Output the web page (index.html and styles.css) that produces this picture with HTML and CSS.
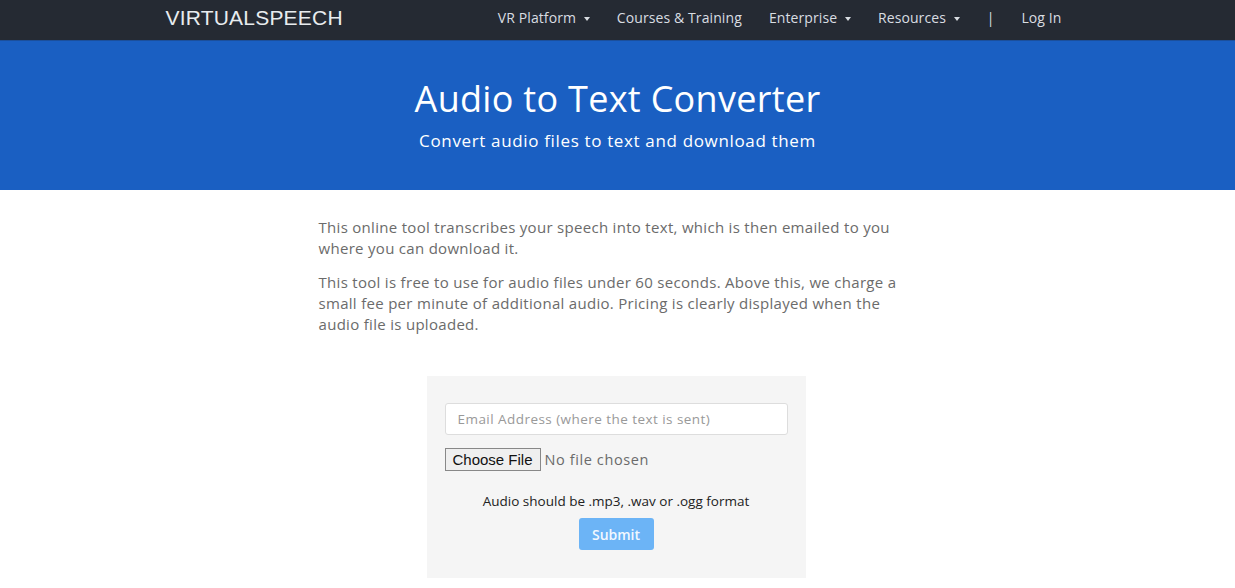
FILE: index.html
```html
<!DOCTYPE html>
<html lang="en">
<head>
  <meta charset="UTF-8" />
  <meta name="viewport" content="width=device-width, initial-scale=1.0" />
  <title>Audio to Text Converter</title>
  <link rel="stylesheet" href="styles.css">
</head>
<body>

  <header class="topbar">
    <div class="topbar-inner">
      <a class="brand" href="#">VIRTUALSPEECH</a>
      <nav class="menu">
        <a href="#">VR Platform <span class="caret"></span></a>
        <a href="#">Courses &amp; Training</a>
        <a href="#">Enterprise <span class="caret"></span></a>
        <a href="#">Resources <span class="caret"></span></a>
        <span class="divider">|</span>
        <a href="#">Log In</a>
      </nav>
    </div>
  </header>

  <section class="hero">
    <h1>Audio to Text Converter</h1>
    <p>Convert audio files to text and download them</p>
  </section>

  <main class="content">
    <p>This online tool transcribes your speech into text, which is then emailed to you where you can download it.</p>
    <p>This tool is free to use for audio files under 60 seconds. Above this, we charge a small fee per minute of additional audio. Pricing is clearly displayed when the audio file is uploaded.</p>

    <!-- Upload Form -->
    <form class="upload-box">
      <input type="email" class="email-field" placeholder="Email Address (where the text is sent)" />
      <div class="file-row">
        <span class="file-btn">Choose File</span>
        <span class="file-name">No file chosen</span>
      </div>
      <p class="format-note">Audio should be .mp3, .wav or .ogg format</p>
      <button type="button" class="submit-btn">Submit</button>
    </form>
  </main>

</body>
</html>
```

FILE: styles.css
```css
body {
  margin: 0;
  font-family: "Open Sans", Arial, sans-serif;
  background: #fff;
  color: #666;
}

/* Top Navigation */
.topbar {
  background-color: #252a33;
  height: 40px;
  border-bottom: 1px solid #1b4f9c;
}

.topbar-inner {
  width: 910px;
  margin: 0 auto;
  height: 35px;
  display: flex;
  justify-content: space-between;
  align-items: center;
}

.brand {
  font-family: "Liberation Sans", Arial, sans-serif;
  font-size: 21px;
  letter-spacing: 0.2px;
  color: #e8ecef;
  text-decoration: none;
  margin-left: 3px;
}

.menu {
  display: flex;
  align-items: center;
}

.menu a {
  color: #d9dde2;
  text-decoration: none;
  font-size: 14px;
  letter-spacing: 0.1px;
  padding: 0 13.5px;
}

.menu a:last-child {
  padding-right: 11px;
}

.caret {
  display: inline-block;
  width: 0;
  height: 0;
  margin-left: 4px;
  vertical-align: middle;
  border-top: 4px solid #d9dde2;
  border-left: 3.5px solid transparent;
  border-right: 3.5px solid transparent;
}

.divider {
  color: #d9dde2;
  font-size: 14px;
  padding: 0 13.5px;
}

/* Hero Banner */
.hero {
  background-color: #1a5fc2;
  color: #fff;
  text-align: center;
  height: 149px;
  box-sizing: border-box;
  padding-top: 35px;
}

.hero h1 {
  margin: 0;
  font-size: 36px;
  font-weight: 400;
  line-height: 46px;
  letter-spacing: 0.3px;
}

.hero p {
  margin: 8px 0 0;
  font-size: 17px;
  letter-spacing: 0.65px;
  line-height: 22px;
}

/* Main Content */
.content {
  width: 600px;
  margin: 0 auto;
  padding-top: 27px;
  transform: translateX(1px);
}

.content > p {
  margin: 0 0 13px;
  font-size: 15px;
  letter-spacing: 0.3px;
  line-height: 21px;
  color: #6b6b6b;
}

/* Upload Form */
.upload-box {
  width: 379px;
  margin: 41px 0 0 108px;
  background: #f5f5f5;
  padding: 27px 18px 28px;
  box-sizing: border-box;
  text-align: center;
}

.email-field {
  display: block;
  width: 100%;
  height: 32px;
  box-sizing: border-box;
  border: 1px solid #ddd;
  border-radius: 3px;
  padding: 0 12px;
  font-family: "Open Sans", Arial, sans-serif;
  font-size: 13.5px;
  letter-spacing: 0.45px;
  background: #fff;
}

.email-field::placeholder {
  color: #999;
}

.file-row {
  display: flex;
  align-items: center;
  margin-top: 13px;
}

.file-btn {
  font-family: "Liberation Sans", Arial, sans-serif;
  font-size: 15px;
  color: #111;
  background: #efefef;
  border: 1px solid #888;
  padding: 2px 7px;
  line-height: 17px;
}

.file-name {
  margin-left: 4px;
  font-size: 14.5px;
  letter-spacing: 0.6px;
  color: #6b6b6b;
}

.format-note {
  margin: 21px 0 8px;
  font-size: 13.5px;
  color: #222;
}

.submit-btn {
  background-color: #6cb4f6;
  color: #f2f8ff;
  border: none;
  border-radius: 3px;
  font-family: "Open Sans", Arial, sans-serif;
  font-size: 14px;
  font-weight: 600;
  width: 75px;
  height: 32px;
}
```
